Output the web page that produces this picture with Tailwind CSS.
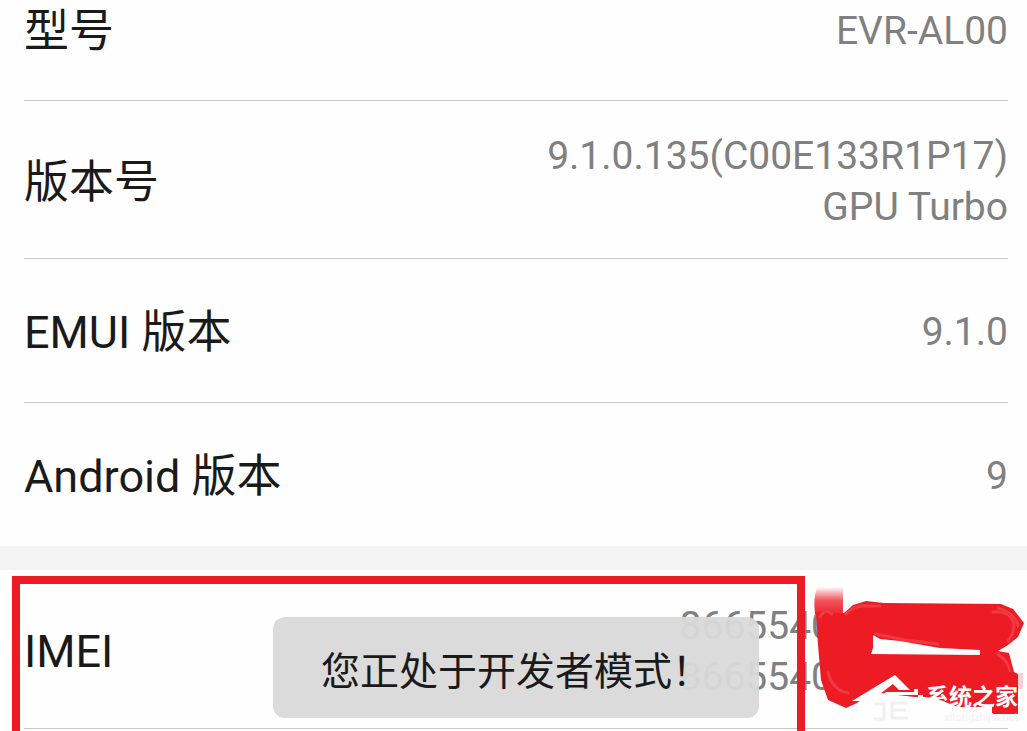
<!DOCTYPE html>
<html lang="zh-CN">
<head>
    <meta charset="UTF-8">
    <meta name="viewport" content="width=device-width, initial-scale=1.0">
    <title>关于手机</title>
    <script src="https://cdn.jsdelivr.net/npm/@tailwindcss/browser@4"></script>
</head>
<body class="min-h-screen flex flex-col overflow-hidden bg-[#fefefe] font-['Roboto','Noto_Sans_CJK_SC',sans-serif] text-[#1a1a1a]">
    <!-- 版本信息 -->
    <dl class="pl-6 pr-[19px]">
        <div class="flex items-center justify-between pb-[38px] border-b border-[#c8c8c8]">
            <dt class="pt-0.5 text-[45px] leading-[60px]">型号</dt>
            <dd class="text-[39px] leading-[51px] text-[#808080] text-right">EVR-AL00</dd>
        </div>
        <div class="flex items-center justify-between pt-[30px] pb-[25px] border-b border-[#c8c8c8]">
            <dt class="pt-0.5 text-[45px] leading-[60px]">版本号</dt>
            <dd class="text-[39px] leading-[51px] text-[#808080] text-right">9.1.0.135(C00E133R1P17)<br>GPU Turbo</dd>
        </div>
        <div class="flex items-center justify-between pt-[42px] pb-[39px] border-b border-[#c8c8c8]">
            <dt class="pt-0.5 text-[45px] leading-[60px]">EMUI 版本</dt>
            <dd class="text-[39px] leading-[51px] text-[#808080] text-right">9.1.0</dd>
        </div>
        <div class="flex items-center justify-between pt-[42px] pb-[39px]">
            <dt class="pt-0.5 text-[45px] leading-[60px]">Android 版本</dt>
            <dd class="text-[39px] leading-[51px] text-[#808080] text-right">9</dd>
        </div>
    </dl>

    <div class="h-6 bg-[#f3f3f3]"></div>

    <!-- IMEI -->
    <section class="relative grow">
        <dl class="pl-6 pr-[19px]">
            <div class="flex items-center justify-between pt-[31px] pb-[25px] border-b border-[#c8c8c8]">
                <dt class="text-[45px] leading-[60px]">IMEI</dt>
                <dd class="pr-[175px] text-[39px] leading-[51px] text-[#808080] text-right">8665540<br>8665540</dd>
            </div>
        </dl>

        <!-- 提示框 -->
        <div role="status" class="absolute left-[273px] top-[47px] px-12 pt-[30px] pb-5 rounded-xl bg-[#d9d9d9]/95 text-[39px] leading-[51px] whitespace-nowrap">您正处于开发者模式！</div>

        <!-- 红框标注 -->
        <div class="absolute left-3 right-[222px] top-[6px] bottom-0 border-8 border-b-0 border-[#ed1c24]"></div>

        <!-- 涂抹和水印 -->
        <svg class="absolute right-0 top-0 w-[227px] h-[161px]" viewBox="800 570 227 161" aria-hidden="true">
            <defs>
                <linearGradient id="fade" x1="0" y1="0" x2="0" y2="1">
                    <stop offset="0" stop-color="#ed1c24" stop-opacity="0"/>
                    <stop offset="0.5" stop-color="#ed1c24" stop-opacity="0.75"/>
                    <stop offset="1" stop-color="#ed1c24" stop-opacity="0.95"/>
                </linearGradient>
            </defs>
            <path fill="url(#fade)" d="M817 587 H843 V614 H815 Q813 598 817 587Z"/>
            <path fill="#ed1c24" d="M816 613 L844 613 L853 605 L866 601 L884 603 L1001 604 L1013 609 L1024 623 L1018 637 L1008 645 L998 651 L1009 653 L1014 672 L1018 674 L1018 714 L992 714 L992 707 L958 707 L940 700 L872 692 L857 703 L846 708 L828 700 L821 680 L818 645Z"/>
            <!-- 笔触的浅色边缘 -->
            <g fill="none" stroke="#f03a41" stroke-width="3" stroke-linecap="round" stroke-linejoin="round">
                <path d="M846 614 Q855 604 868 606 L880 606"/>
                <path d="M993 612 Q1010 610 1014 624 Q1014 634 1008 641"/>
                <path d="M998 608 Q1016 614 1018 626"/>
                <path d="M876 634 L905 640 L938 644"/>
                <path d="M998 654 Q1008 661 1010 671"/>
                <path d="M820 617 Q824 608 832 614"/>
                <path d="M828 672 Q832 690 848 693"/>
            </g>
            <path fill="#fefefe" d="M873 635 L880 639 L900 641 L917 644 L940 648 L980 650 L980 655 L871 654 L873 648Z"/>
            <rect x="1018" y="673" width="5" height="16" fill="#ed1c24" opacity="0.2"/>
            <!-- 水印底色 -->
            <path fill="#fefefe" d="M866 697 H926 L940 701 L958 707 H992 V722 H866Z"/>
            <!-- 房子标志 -->
            <path fill="#fff" d="M852 701 L895 675 L910 690 H899 L893 684 L876 697 L868 701Z"/>
            <path fill="#fff" d="M879 698 L886 692 H918 V695 H892 L888 698Z"/>
            <path fill="#fff" d="M914 689 h4 v4 h-4z M918 695 h5 v4 h-5z"/>
            <path fill="none" stroke="#f0f0f0" stroke-width="3" d="M874 704 H884 V719 H874 M908 703 H892 V710 H906 M892 710 V718 H908"/>
        </svg>
        <span class="absolute right-[9px] top-[113px] text-[23px] leading-[30px] font-bold text-white">系统之家</span>
        <span class="absolute right-[9px] top-[142px] text-[11px] leading-[12px] text-[#f3f3f3]">xitongzhijia.net</span>
    </section>
</body>
</html>
